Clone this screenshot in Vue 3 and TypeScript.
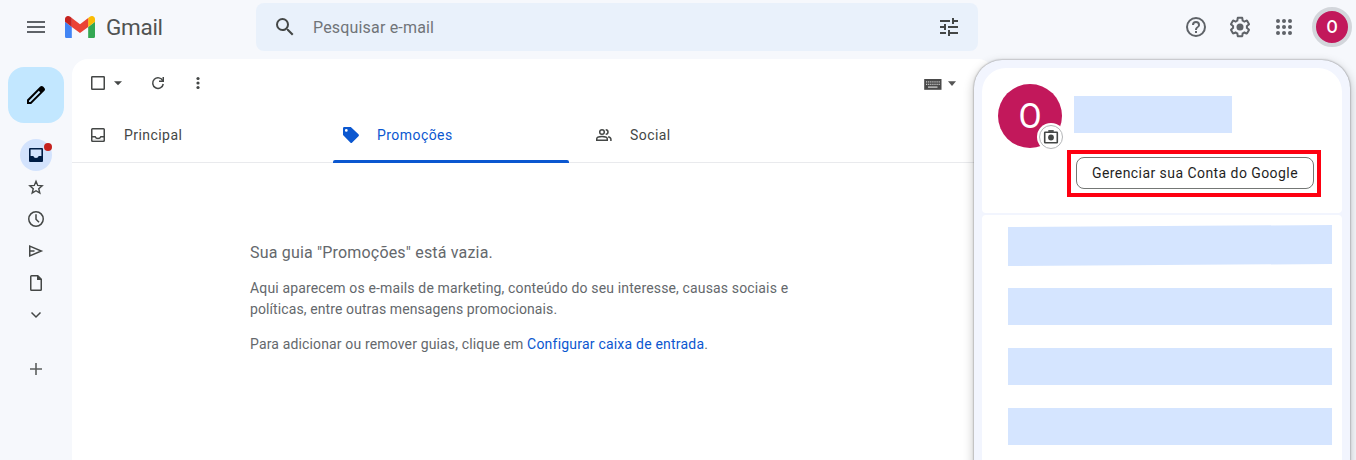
<script setup lang="ts">
interface Tab {
  id: string
  label: string
  active: boolean
}

const tabs: Tab[] = [
  { id: 'primary', label: 'Principal', active: false },
  { id: 'promo', label: 'Promoções', active: true },
  { id: 'social', label: 'Social', active: false },
]
const accounts: number[] = [1, 2, 3, 4]
</script>

<template>
  <div class="app">
    <header class="topbar">
      <svg class="menu" width="24" height="24" viewBox="0 0 24 24" fill="#5f6368"><path d="M3 6h18v2H3zM3 11h18v2H3zM3 16h18v2H3z" /></svg>
      <div class="brand">
        <svg width="30" height="22.5" viewBox="52 42 88 66">
          <path fill="#4285f4" d="M58 108h14V74L52 59v43c0 3.32 2.69 6 6 6" />
          <path fill="#34a853" d="M120 108h14c3.32 0 6-2.69 6-6V59l-20 15" />
          <path fill="#fbbc04" d="M120 48v26l20-15v-8c0-7.42-8.47-11.65-14.4-7.2" />
          <path fill="#ea4335" d="M72 74V48l24 18 24-18v26L96 92" />
          <path fill="#c5221f" d="M52 51v8l20 15V48l-5.6-4.2c-5.94-4.45-14.4-.22-14.4 7.2" />
        </svg>
        <span class="wordmark">Gmail</span>
      </div>
      <div class="search">
        <svg width="24" height="24" viewBox="0 0 24 24" fill="#444746"><path d="M15.5 14h-.79l-.28-.27A6.47 6.47 0 0 0 16 9.5 6.5 6.5 0 1 0 9.5 16c1.61 0 3.09-.59 4.23-1.57l.27.28v.79l5 4.99L20.49 19zm-6 0a4.5 4.5 0 1 1 0-9 4.5 4.5 0 0 1 0 9" /></svg>
        <span class="placeholder">Pesquisar e-mail</span>
        <svg width="24" height="24" viewBox="0 0 24 24" fill="#444746"><path d="M3 17v2h6v-2zM3 5v2h10V5zm10 16v-2h8v-2h-8v-2h-2v6zM7 9v2H3v2h4v2h2V9zm14 4v-2H11v2zm-6-4h2V7h4V5h-4V3h-2z" /></svg>
      </div>
      <nav class="actions">
        <svg width="24" height="24" viewBox="0 0 24 24" fill="#5f6368"><path d="M11 18h2v-2h-2zm1-16a10 10 0 1 0 0 20 10 10 0 0 0 0-20m0 18a8 8 0 1 1 0-16 8 8 0 0 1 0 16m0-14a4 4 0 0 0-4 4h2a2 2 0 1 1 4 0c0 2-3 1.75-3 5h2c0-2.25 3-2.5 3-5a4 4 0 0 0-4-4" /></svg>
        <svg width="24" height="24" viewBox="0 0 24 24" fill="#5f6368">
          <path d="M13.85 22.25h-3.7c-.74 0-1.36-.54-1.45-1.27l-.27-1.89c-.27-.14-.53-.29-.79-.46l-1.8.72c-.7.26-1.47-.03-1.81-.65L2.2 15.53c-.35-.66-.2-1.44.36-1.88l1.53-1.19c-.01-.15-.02-.3-.02-.46 0-.15.01-.31.02-.46l-1.52-1.19c-.59-.45-.74-1.26-.37-1.88l1.85-3.19c.34-.62 1.11-.9 1.79-.63l1.81.73c.26-.17.52-.32.78-.46l.27-1.91c.09-.7.71-1.25 1.44-1.25h3.7c.74 0 1.36.54 1.45 1.27l.27 1.89c.27.14.53.29.79.46l1.8-.72c.71-.26 1.48.03 1.82.65l1.84 3.18c.36.66.2 1.44-.36 1.88l-1.52 1.19c.01.15.02.3.02.46s-.01.31-.02.46l1.52 1.19c.56.45.72 1.23.37 1.86l-1.86 3.22c-.34.62-1.11.9-1.8.63l-1.8-.72c-.26.17-.52.32-.78.46l-.27 1.91c-.1.68-.72 1.22-1.46 1.22m-3.23-2h2.76l.37-2.55.53-.22c.44-.18.88-.44 1.34-.78l.45-.34 2.38.96 1.38-2.4-2.03-1.58.07-.56c.03-.26.06-.51.06-.78s-.03-.53-.06-.78l-.07-.56 2.03-1.58-1.39-2.4-2.39.96-.45-.35c-.42-.32-.87-.58-1.33-.77l-.52-.22-.37-2.55h-2.76l-.37 2.55-.53.21c-.44.19-.88.44-1.34.79l-.45.33-2.38-.95-1.39 2.39 2.03 1.58-.07.56a7 7 0 0 0-.06.79c0 .26.02.53.06.78l.07.56-2.03 1.58 1.38 2.4 2.39-.96.45.35c.43.33.86.58 1.33.77l.53.22z" />
          <circle cx="12" cy="12" r="3.5" />
        </svg>
        <svg width="24" height="24" viewBox="0 0 24 24" fill="#5f6368">
          <template v-for="y in [6, 12, 18]" :key="y">
            <circle v-for="x in [6, 12, 18]" :key="x" :cx="x" :cy="y" r="2" />
          </template>
        </svg>
      </nav>
      <div class="avatar-small"><span>O</span></div>
    </header>

    <div class="content">
      <aside class="rail">
        <button class="compose" aria-label="Escrever">
          <svg width="24" height="24" viewBox="0 0 24 24"><path fill="#000" fill-rule="evenodd" d="M20.41 4.94l-1.35-1.35c-.78-.78-2.05-.78-2.83 0L3 16.82V21h4.18L20.41 7.77c.79-.78.79-2.05 0-2.83M6.41 19.06L5 19v-1.36l9.82-9.82 1.41 1.41z" /></svg>
        </button>
        <div class="nav">
          <div class="nav-item selected">
            <svg width="20" height="20" viewBox="0 0 20 20" fill="#001d45"><path fill-rule="evenodd" d="M4 3h12a1 1 0 0 1 1 1v12a1 1 0 0 1-1 1H4a1 1 0 0 1-1-1V4a1 1 0 0 1 1-1m.6 1.6v6.4h2.7a2.8 2.8 0 0 0 5.4 0h2.7V4.600z" /></svg>
            <span class="unread" />
          </div>
          <div class="nav-item"><svg width="20" height="20" viewBox="0 0 20 20" fill="none" stroke="#444746" stroke-width="1.4"><path d="M10 4.300l1.700 4.150 4.450.35-3.400 2.900 1.050 4.350L10 13.750l-3.800 2.300 1.050-4.350-3.400-2.900 4.450-.35z" /></svg></div>
          <div class="nav-item"><svg width="20" height="20" viewBox="0 0 20 20" fill="none" stroke="#444746" stroke-width="1.5"><circle cx="10" cy="10" r="7.250" /><path d="M10 5.200v5l3 3" /></svg></div>
          <div class="nav-item"><svg width="20" height="20" viewBox="0 0 20 20" fill="none" stroke="#444746" stroke-width="1.5"><path d="M3.750 5.100L15.300 10 3.750 14.900zM3.750 10H8.500" /></svg></div>
          <div class="nav-item"><svg width="20" height="20" viewBox="0 0 20 20" fill="none" stroke="#444746" stroke-width="1.5"><path d="M5.500 2.750H11.700l3.550 3.550v10.200a.75.75 0 0 1-.75.75h-9a.75.75 0 0 1-.75-.75v-13a.75.75 0 0 1 .75-.75z" /><path fill="#444746" stroke="none" d="M11 2.500h1l3.600 3.600v1H11z" /></svg></div>
          <div class="nav-item"><svg width="20" height="20" viewBox="0 0 20 20" fill="none" stroke="#444746" stroke-width="1.5"><path d="M5.500 7.500L10 12l4.500-4.500" /></svg></div>
        </div>
        <svg class="add" width="20" height="20" viewBox="0 0 20 20" fill="none" stroke="#5c5f5e" stroke-width="1.6"><path d="M10 4v12M4 10h12" /></svg>
      </aside>

      <main class="mail">
        <div class="toolbar">
          <svg width="20" height="20" viewBox="0 0 20 20" fill="none" stroke="#444746" stroke-width="1.5"><rect x="3.750" y="3.750" width="12.500" height="12.500" rx=".6" /></svg>
          <svg class="caret" width="20" height="20" viewBox="0 0 20 20" fill="#444746"><path d="M6 8.200h8l-4 4z" /></svg>
          <svg class="refresh" width="20" height="20" viewBox="0 0 20 20" fill="none" stroke="#444746" stroke-width="1.5"><path d="M14.800 7.800A5.300 5.300 0 1 0 15.250 11" /><path d="M15.250 4v4.250H11" /></svg>
          <svg class="more" width="20" height="20" viewBox="0 0 20 20" fill="#444746"><circle cx="10" cy="5.500" r="1.600" /><circle cx="10" cy="10" r="1.600" /><circle cx="10" cy="14.500" r="1.600" /></svg>
          <svg class="keyboard" width="18" height="12" viewBox="0 0 18 12">
            <rect x=".2" y="0" width="17.300" height="10.800" fill="#4a4a4a" />
            <path d="M2 2.800h14M2 5.300h14" stroke="#ccc" stroke-width="1.300" stroke-dasharray="1.200 .9" />
            <path d="M4 8.100h9.500" stroke="#ddd" stroke-width="1.200" />
          </svg>
          <svg class="key-caret" width="9" height="6" viewBox="0 0 9 6" fill="#555"><path d="M0 .300h8L4 5z" /></svg>
        </div>

        <div class="tabs">
          <div v-for="tab in tabs" :key="tab.id" class="tab" :class="{ active: tab.active }">
            <svg v-if="tab.id === 'primary'" width="20" height="20" viewBox="0 0 20 20" fill="none" stroke="#444746" stroke-width="1.5"><rect x="3.750" y="3.750" width="12.500" height="12.500" rx=".8" /><path d="M3.750 11.700h3.400c.5 1.200 1.550 1.900 2.850 1.900s2.350-.7 2.850-1.900h3.400" /><path stroke="#c9cac9" stroke-width="1" d="M5 15h10" /></svg>
            <svg v-else-if="tab.id === 'promo'" width="20" height="20" viewBox="0 0 20 20" fill="#0b57d0"><path fill-rule="evenodd" d="M3.300 2h6.500l7.700 7.300a1.300 1.300 0 0 1 0 1.900l-6.300 6.300a1.300 1.300 0 0 1-1.900 0L2 10.100V3.300A1.300 1.300 0 0 1 3.300 2m2 2a1.400 1.400 0 1 0 0 2.800 1.400 1.400 0 0 0 0-2.800" /></svg>
            <svg v-else width="20" height="20" viewBox="0 0 20 20" fill="none" stroke="#444746" stroke-width="1.5"><circle cx="8" cy="7" r="2.300" /><path d="M2.750 15.250v-1.400c0-1.600 3-2.300 5.250-2.300s5.250.7 5.250 2.300v1.400z" /><path d="M11.700 4.700a2.300 2.300 0 0 1 0 4.600M14.200 11.700c1.600.5 2.700 1.200 2.700 2.400v1.900" /></svg>
            <span class="tab-label">{{ tab.label }}</span>
          </div>
        </div>

        <section class="empty">
          <h1>Sua guia "Promoções" está vazia.</h1>
          <p>Aqui aparecem os e-mails de marketing, conteúdo do seu interesse, causas sociais e<br /><span class="second-line">políticas, entre outras mensagens promocionais.</span></p>
          <p>Para adicionar ou remover guias, clique em <a>Configurar caixa de entrada</a>.</p>
        </section>
      </main>
    </div>

    <div class="account-panel">
      <section class="profile">
        <div class="avatar-large">
          <span>O</span>
          <div class="camera">
            <svg width="16" height="16" viewBox="0 0 16 16" fill="none" stroke="#444746" stroke-width="1.600"><rect x="1.700" y="3.200" width="12.600" height="10.600" rx=".5" /><circle cx="8" cy="8.500" r="2.900" fill="#444746" stroke="none" /><path d="M5.300 2h5.400" stroke-width="1.800" /></svg>
          </div>
        </div>
        <div class="details">
          <div class="name-block" />
          <div class="highlight"><button class="manage"><span>Gerenciar sua Conta do Google</span></button></div>
        </div>
      </section>
      <section class="accounts">
        <div v-for="account in accounts" :key="account" class="account" :class="{ tilted: account === 1 }" />
      </section>
    </div>
  </div>
</template>

<style>
body {
  margin: 0;
  overflow: hidden;
}
</style>

<style scoped>
.app {
  position: relative;
  width: 1356px;
  height: 460px;
  overflow: hidden;
  background: #f6f8fc;
  font-family: Roboto, "Liberation Sans", sans-serif;
  color: #444746;
}
svg {
  display: block;
  flex: none;
}
button {
  border: 0;
  padding: 0;
  font: inherit;
}
.topbar {
  display: flex;
  align-items: center;
  height: 54px;
  padding-left: 24px;
}
.brand {
  display: flex;
  align-items: center;
  width: 191px;
  padding-left: 17px;
}
.wordmark {
  margin-left: 11px;
  font-size: 22.5px;
  line-height: 28px;
  letter-spacing: -0.3px;
  color: #505352;
}
.search {
  display: flex;
  align-items: center;
  box-sizing: border-box;
  width: 722px;
  height: 48px;
  padding: 0 17px;
  border-radius: 8px;
  background: #e9f1fb;
}
.placeholder {
  flex: 1;
  margin-left: 16px;
  font-size: 16px;
  letter-spacing: 0.18px;
  color: #707478;
}
.actions {
  display: flex;
  gap: 20px;
  margin-left: 206px;
}
.avatar-small {
  display: flex;
  align-items: center;
  justify-content: center;
  width: 32px;
  height: 32px;
  margin-left: 16px;
  border: 4px solid #d3d6db;
  border-radius: 50%;
  background: #c2185b;
  color: #fff;
  font-size: 17.5px;
  font-weight: 500;
}
.avatar-small span {
  transform: scaleX(0.93);
}
.content {
  display: flex;
  margin-top: 5px;
}
.rail {
  display: flex;
  flex-direction: column;
  align-items: center;
  width: 72px;
  padding-top: 8px;
}
.compose {
  display: flex;
  align-items: center;
  justify-content: center;
  width: 56px;
  height: 56px;
  border-radius: 16px;
  background: #c2e7ff;
}
.nav {
  margin-top: 16px;
}
.nav-item {
  position: relative;
  display: flex;
  align-items: center;
  justify-content: center;
  width: 32px;
  height: 32px;
}
.selected {
  border-radius: 50%;
  background: #d3e3fd;
}
.unread {
  position: absolute;
  top: 4px;
  right: 0;
  width: 8px;
  height: 8px;
  border-radius: 50%;
  background: #c5221f;
}
.add {
  margin-top: 28px;
}
.mail {
  width: 922px;
  height: 401px;
  border-radius: 16px 16px 0 0;
  background: #fff;
}
.toolbar {
  display: flex;
  align-items: center;
  height: 48px;
  padding-left: 16px;
}
.refresh,
.more {
  margin-left: 20px;
}
.keyboard {
  margin-left: 716px;
  margin-top: 4px;
}
.key-caret {
  margin-left: 6px;
  margin-top: 2px;
}
.tabs {
  display: flex;
  box-sizing: border-box;
  height: 56px;
  border-bottom: 1px solid #e9eaed;
}
.tab {
  position: relative;
  display: flex;
  align-items: center;
  box-sizing: border-box;
  width: 253px;
  height: 56px;
  padding-left: 16px;
  font-size: 14px;
  letter-spacing: 0.44px;
}
.tab.active {
  color: #0b57d0;
}
.tab.active::after {
  content: "";
  position: absolute;
  right: 9px;
  bottom: 0;
  left: 8px;
  height: 3px;
  border-radius: 2px 2px 0 0;
  background: #0b57d0;
}
.tab-label {
  margin-left: 16px;
}
.empty {
  padding: 79px 0 0 178px;
  color: #64686c;
  font-size: 14px;
  line-height: 21px;
  letter-spacing: 0.147px;
}
.empty h1 {
  margin: 0 0 14px;
  font-size: 16px;
  font-weight: 400;
  line-height: 22px;
  letter-spacing: 0.18px;
}
.empty p {
  margin: 0 0 14px;
  white-space: nowrap;
}
.second-line {
  letter-spacing: 0.1px;
}
.empty a {
  letter-spacing: 0.21px;
  color: #0b57d0;
}
.account-panel {
  position: absolute;
  top: 60px;
  left: 974px;
  box-sizing: border-box;
  width: 376px;
  height: 440px;
  padding: 8px;
  border-radius: 28px;
  background: #f2f5fe;
  box-shadow: 0 0 2px rgba(0, 0, 0, 0.5), 0 4px 10px 2px rgba(0, 0, 0, 0.18);
}
.profile {
  display: flex;
  box-sizing: border-box;
  height: 145px;
  padding: 16px;
  border-radius: 24px 24px 4px 4px;
  background: #fff;
}
.avatar-large {
  position: relative;
  display: flex;
  align-items: center;
  justify-content: center;
  width: 64px;
  height: 64px;
  border-radius: 50%;
  background: #c2185b;
  color: #fff;
  font-size: 35px;
}
.avatar-large > span {
  transform: scaleX(0.96);
}
.camera {
  position: absolute;
  top: 41px;
  left: 41px;
  display: flex;
  align-items: center;
  justify-content: center;
  width: 22px;
  height: 22px;
  border: 1px solid #b4b6b8;
  border-radius: 50%;
  background: #fff;
  box-shadow: 0 0 0 2px #fff;
}
.details {
  margin-left: 5px;
  padding-top: 12px;
}
.name-block {
  width: 158px;
  height: 37px;
  margin-left: 7px;
  background: #d5e5ff;
}
.highlight {
  box-sizing: border-box;
  width: 254px;
  height: 47px;
  margin-top: 17px;
  padding: 3px 5px;
  border: 4px solid #fe0011;
}
.manage {
  display: flex;
  align-items: center;
  justify-content: center;
  box-sizing: border-box;
  width: 238px;
  height: 32px;
  border: 1px solid #747775;
  border-radius: 8px;
  background: #fff;
  color: #1f1f1f;
  font-size: 14px;
  letter-spacing: 0.44px;
  white-space: nowrap;
}
.accounts {
  display: flex;
  flex-direction: column;
  gap: 23px;
  box-sizing: border-box;
  height: 285px;
  margin-top: 2px;
  padding: 11px 10px 0 26px;
  border-radius: 4px 4px 0 0;
  background: #fff;
}
.account {
  flex: none;
  height: 37px;
  background: #d5e5ff;
}
.tilted {
  height: 41px;
  margin: -1px 0;
  clip-path: polygon(0 2px, 100% 0, 100% 39px, 0 100%);
}
</style>
